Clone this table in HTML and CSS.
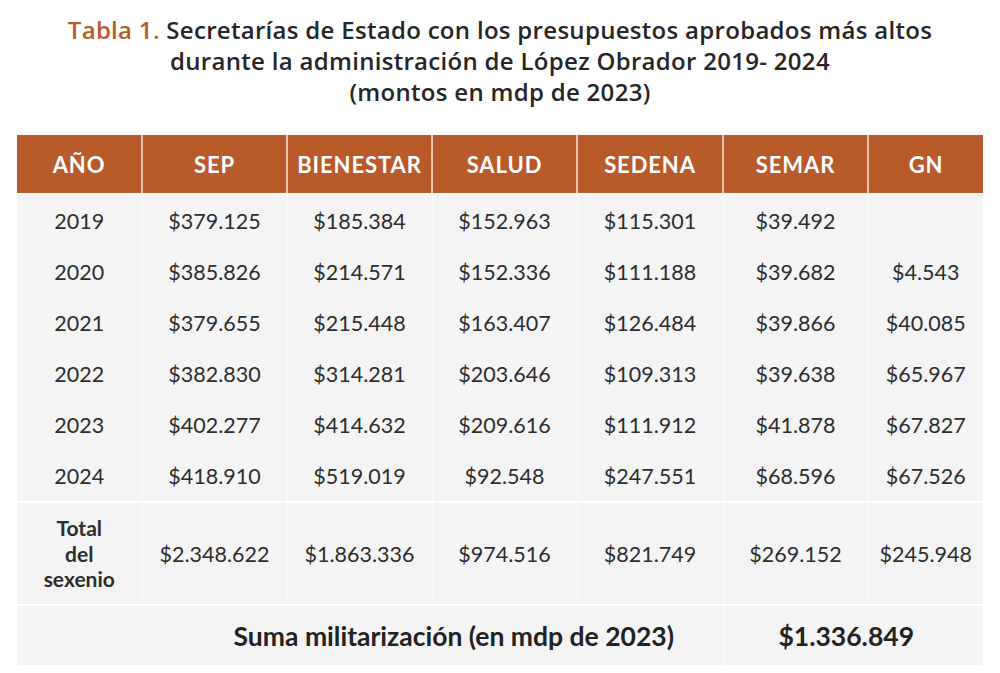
FILE: index.html
```html
<!DOCTYPE html>
<html lang="es">
<head>
<meta charset="utf-8">
<title>Tabla 1</title>
<link rel="stylesheet" href="styles.css">
</head>
<body>
<div class="page">
  <h1 class="title"><span class="tag">Tabla 1.</span> Secretarías de Estado con los presupuestos aprobados más altos<br>durante la administración de López Obrador 2019- 2024<br>(montos en mdp de 2023)</h1>
  <table class="data">
    <colgroup>
      <col class="c-year"><col class="c-mid"><col class="c-mid"><col class="c-mid"><col class="c-mid6"><col class="c-mid"><col class="c-last">
    </colgroup>
    <thead>
      <tr><th>AÑO</th><th>SEP</th><th>BIENESTAR</th><th>SALUD</th><th>SEDENA</th><th>SEMAR</th><th>GN</th></tr>
    </thead>
    <tbody>
      <tr><td>2019</td><td>$379.125</td><td>$185.384</td><td>$152.963</td><td>$115.301</td><td>$39.492</td><td></td></tr>
      <tr><td>2020</td><td>$385.826</td><td>$214.571</td><td>$152.336</td><td>$111.188</td><td>$39.682</td><td>$4.543</td></tr>
      <tr><td>2021</td><td>$379.655</td><td>$215.448</td><td>$163.407</td><td>$126.484</td><td>$39.866</td><td>$40.085</td></tr>
      <tr><td>2022</td><td>$382.830</td><td>$314.281</td><td>$203.646</td><td>$109.313</td><td>$39.638</td><td>$65.967</td></tr>
      <tr><td>2023</td><td>$402.277</td><td>$414.632</td><td>$209.616</td><td>$111.912</td><td>$41.878</td><td>$67.827</td></tr>
      <tr><td>2024</td><td>$418.910</td><td>$519.019</td><td>$92.548</td><td>$247.551</td><td>$68.596</td><td>$67.526</td></tr>
      <tr class="total"><td class="total-label">Total<br>del<br>sexenio</td><td>$2.348.622</td><td>$1.863.336</td><td>$974.516</td><td>$821.749</td><td>$269.152</td><td>$245.948</td></tr>
      <tr class="sum"><td colspan="5" class="sum-label">Suma militarización (en mdp de 2023)</td><td colspan="2" class="sum-value">$1.336.849</td></tr>
    </tbody>
  </table>
</div>
</body>
</html>
```

FILE: styles.css
```css
html, body {
  margin: 0;
  padding: 0;
  background: #ffffff;
}

.page {
  width: 1000px;
  padding: 14px 0 0 0;
  font-family: "Lato", "Open Sans", sans-serif;
  color: #2a2a2a;
}

.title {
  margin: 0 0 28px 0;
  text-align: center;
  font-family: "Open Sans", "Lato", sans-serif;
  font-size: 24px;
  line-height: 31px;
  font-weight: 600;
  letter-spacing: 0.3px;
  color: #262626;
}

.tag {
  color: #b95a2b;
}

.data {
  margin-left: 17px;
  width: 966px;
  border-collapse: collapse;
  table-layout: fixed;
}

.c-year { width: 125px; }
.c-mid { width: 145px; }
.c-mid6 { width: 146px; }
.c-last { width: 115px; }

.data th {
  background: #b95a2b;
  color: #ffffff;
  font-size: 22px;
  font-weight: 700;
  letter-spacing: 0.9px;
  height: 58px;
  padding: 0;
  border-left: 2px solid #e8c3ad;
  border-bottom: 2px solid #ffffff;
  text-align: center;
}

.data th:first-child { border-left: none; }

.data td {
  background: #f4f4f4;
  font-size: 21.5px;
  color: #2d2d2d;
  text-align: center;
  height: 51px;
  padding: 0;
  border-left: 1px solid #fbfbfb;
}

.data td:first-child { border-left: none; }

.total td {
  height: 101px;
  border-top: 2px solid #ffffff;
}

.total .total-label {
  font-weight: 700;
  font-size: 21px;
  line-height: 25.5px;
}

.sum td {
  height: 59px;
  border-top: 2px solid #ffffff;
  font-weight: 700;
  font-size: 26.5px;
  color: #222222;
}

.sum .sum-label {
  padding-left: 168px;
}

.sum .sum-value {
  padding-right: 14px;
}
```
